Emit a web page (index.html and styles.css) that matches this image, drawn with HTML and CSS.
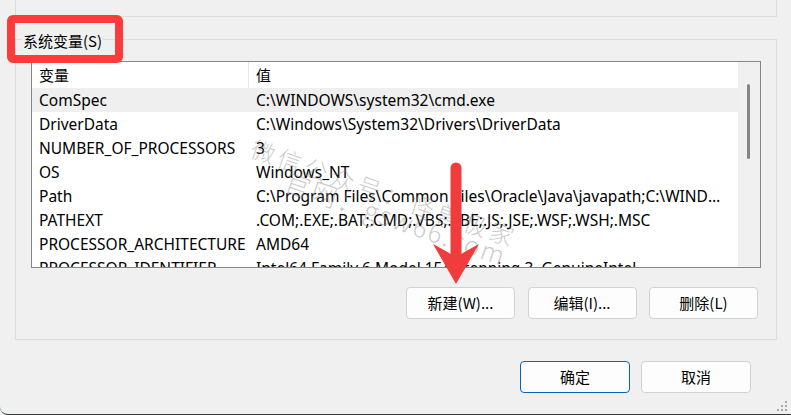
FILE: index.html
```html
<!DOCTYPE html>
<html lang="zh-CN">
<head>
<meta charset="utf-8">
<title>系统变量</title>
<link rel="stylesheet" href="styles.css">
</head>
<body>
<div class="window">
  <div class="upper-group"></div>

  <fieldset class="group">
    <legend class="legend">系统变量(S)</legend>
    <div class="listbox">
      <div class="list">
        <div class="row head"><span class="c1 hc1">变量</span><span class="c2">值</span></div>
        <div class="row hover"><span class="c1">ComSpec</span><span class="c2">C:\WINDOWS\system32\cmd.exe</span></div>
        <div class="row"><span class="c1">DriverData</span><span class="c2">C:\Windows\System32\Drivers\DriverData</span></div>
        <div class="row"><span class="c1">NUMBER_OF_PROCESSORS</span><span class="c2">3</span></div>
        <div class="row"><span class="c1">OS</span><span class="c2">Windows_NT</span></div>
        <div class="row"><span class="c1">Path</span><span class="c2">C:\Program Files\Common Files\Oracle\Java\javapath;C:\WINDOWS\system32;C:\WINDOWS</span></div>
        <div class="row"><span class="c1">PATHEXT</span><span class="c2">.COM;.EXE;.BAT;.CMD;.VBS;.VBE;.JS;.JSE;.WSF;.WSH;.MSC</span></div>
        <div class="row"><span class="c1">PROCESSOR_ARCHITECTURE</span><span class="c2">AMD64</span></div>
        <div class="row"><span class="c1">PROCESSOR_IDENTIFIER</span><span class="c2">Intel64 Family 6 Model 154 Stepping 3, GenuineIntel</span></div>
      </div>
      <div class="scrollbar"><div class="thumb"></div></div>
    </div>
    <div class="actions">
      <button class="btn">新建(W)...</button>
      <button class="btn">编辑(I)...</button>
      <button class="btn">删除(L)</button>
    </div>
  </fieldset>

  <div class="footer">
    <button class="btn primary">确定</button>
    <button class="btn">取消</button>
  </div>

  <div class="highlight"></div>

  <div class="watermark wm1">微信公众号：怪兽极家</div>
  <div class="watermark wm2">官网：gsw66.com</div>

  <svg class="arrow" width="60" height="130" viewBox="0 0 60 130">
    <line x1="30" y1="8" x2="30" y2="95" stroke="#f03c3c" stroke-width="11" stroke-linecap="round"/>
    <path d="M30 124 L7 84 Q20 91 30 97 Q40 91 53 84 Z" fill="#f03c3c"/>
  </svg>

  <svg class="grip" width="14" height="12" viewBox="0 0 14 12">
    <rect x="10" y="1" width="2" height="2" fill="#a8a8a8"/>
    <rect x="6" y="5" width="2" height="2" fill="#a8a8a8"/>
    <rect x="10" y="5" width="2" height="2" fill="#a8a8a8"/>
    <rect x="2" y="9" width="2" height="2" fill="#a8a8a8"/>
    <rect x="6" y="9" width="2" height="2" fill="#a8a8a8"/>
    <rect x="10" y="9" width="2" height="2" fill="#a8a8a8"/>
  </svg>
</div>
</body>
</html>
```

FILE: styles.css
```css
* { box-sizing: border-box; }

html, body {
  margin: 0;
  padding: 0;
  background: #f0f0f0;
}

body {
  font-family: "Noto Sans", "Noto Sans CJK SC", sans-serif;
  font-size: 15.5px;
  color: #000;
}

.window {
  position: relative;
  width: 791px;
  height: 415px;
  overflow: hidden;
  background: #f0f0f0;
  border-bottom: 1px solid #33373c;
  border-bottom-left-radius: 8px;
  display: flex;
  flex-direction: column;
}

.upper-group {
  height: 17px;
  margin: 0 14px 0 15px;
  border: 1px solid #dcdcdc;
  border-top: none;
  flex: none;
}

.group {
  margin: 12px 14px 0 15px;
  padding: 0 15px 20px 15px;
  border: 1px solid #dcdcdc;
  min-width: 0;
  flex: none;
}

.legend {
  padding: 0 1px;
  margin-left: -9px;
  height: 20px;
  line-height: 20px;
  font-family: "Noto Sans CJK SC", "Noto Sans", sans-serif;
  font-size: 15px;
  position: relative;
  top: 2px;
}

.listbox {
  margin-top: 12px;
  height: 207px;
  border: 1px solid #868686;
  background: #fff;
  display: flex;
  overflow: hidden;
}

.list {
  flex: 1;
  min-width: 0;
  overflow: hidden;
}

.row {
  display: grid;
  grid-template-columns: 217px 1fr;
  height: 24px;
  line-height: 25px;
  white-space: nowrap;
}

.row.head {
  height: 26px;
  line-height: 26px;
}

.row.hover {
  background: #efefef;
}

.c1 {
  padding-left: 7px;
  overflow: hidden;
}

.c2 {
  padding-left: 7px;
  overflow: hidden;
  text-overflow: ellipsis;
  padding-right: 6px;
}

.hc1 {
  border-right: 1px solid #e6e6e6;
  font-family: "Noto Sans CJK SC", sans-serif;
  font-size: 15px;
}

.head .c2 {
  font-family: "Noto Sans CJK SC", sans-serif;
  font-size: 15px;
}

.scrollbar {
  width: 22px;
  flex: none;
  background: #f0f0f0;
  position: relative;
  padding-top: 22px;
  padding-left: 9px;
}

.thumb {
  width: 3px;
  height: 75px;
  background: #858585;
  border-radius: 2px;
}

.actions {
  display: flex;
  justify-content: flex-end;
  gap: 12.5px;
  margin-top: 19px;
  padding-right: 3px;
}

.btn {
  width: 109px;
  height: 32px;
  border: 1px solid #d2d2d2;
  border-radius: 4px;
  background: #fdfdfd;
  font-family: "Noto Sans CJK SC", "Noto Sans", sans-serif;
  font-size: 15px;
  color: #000;
  padding: 0;
  line-height: 30px;
}

.footer {
  display: flex;
  justify-content: flex-end;
  gap: 11px;
  margin-top: 21px;
  padding-right: 40px;
}

.footer .btn {
  width: 110px;
}

.btn.primary {
  border-color: #0067c0;
}

.highlight {
  position: absolute;
  left: 7px;
  top: 15px;
  width: 116px;
  height: 48px;
  border: 8px solid #fd3b3b;
  border-radius: 6px;
}

.watermark {
  position: absolute;
  font-family: "Noto Sans CJK SC", sans-serif;
  font-weight: 300;
  color: rgba(140, 140, 140, 0.45);
  white-space: nowrap;
  transform-origin: 0 0;
  transform: rotate(19deg);
}

.wm1 {
  left: 258px;
  top: 130px;
  font-size: 24px;
  letter-spacing: 4px;
}

.wm2 {
  left: 292px;
  top: 162px;
  font-size: 26px;
  letter-spacing: 2px;
}

.arrow {
  position: absolute;
  left: 426px;
  top: 160px;
}

.grip {
  position: absolute;
  right: 2px;
  bottom: 2px;
}
```
